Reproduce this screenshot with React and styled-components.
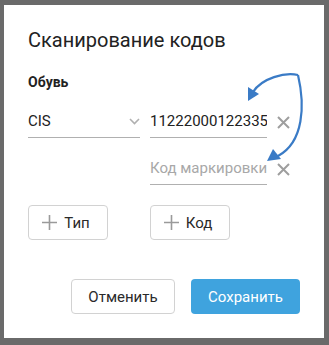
import React from "react";
import styled, { createGlobalStyle } from "styled-components";

const GlobalStyle = createGlobalStyle`
  html, body {
    margin: 0;
    padding: 0;
    background: #6a6a6a;
    font-family: Roboto, "Noto Sans", Arial, sans-serif;
  }
`;

const Backdrop = styled.div`
  width: 329px;
  height: 345px;
  padding: 5px 0 0 4px;
  box-sizing: border-box;
`;

const Modal = styled.div`
  position: relative;
  width: 320px;
  height: 333px;
  box-sizing: border-box;
  padding: 23px 24px 24px 24px;
  background: #ffffff;
  display: flex;
  flex-direction: column;
`;

const Title = styled.h2`
  margin: 0;
  font-size: 20px;
  line-height: 24px;
  font-weight: 400;
  color: #222222;
`;

const SectionLabel = styled.div`
  margin-top: 22px;
  font-size: 14px;
  line-height: 16px;
  font-weight: 700;
  color: #222222;
`;

const Row = styled.div`
  display: flex;
  align-items: flex-end;
  margin-top: ${(p) => p.$top}px;
`;

const Field = styled.div`
  width: ${(p) => p.$width}px;
  margin-right: ${(p) => p.$gap || 0}px;
  box-sizing: border-box;
  display: flex;
  align-items: center;
  justify-content: space-between;
  padding-bottom: 7px;
  border-bottom: 1px solid #b0b0b0;
  font-size: 15px;
  line-height: 18px;
  color: ${(p) => (p.$placeholder ? "#a8a8a8" : "#222222")};
  white-space: nowrap;
  overflow: hidden;
`;

const Spacer = styled.div`
  width: ${(p) => p.$width}px;
  margin-right: ${(p) => p.$gap || 0}px;
`;

const ClearButton = styled.button`
  margin: 0 0 ${(p) => p.$bottom}px 9px;
  padding: 0;
  border: none;
  background: none;
  width: 14px;
  height: 14px;
  display: flex;
  align-items: center;
  justify-content: center;
  cursor: pointer;
`;

const AddRow = styled.div`
  display: flex;
  gap: 42px;
  margin-top: 20px;
`;

const OutlineButton = styled.button`
  width: ${(p) => p.$width}px;
  height: 35px;
  box-sizing: border-box;
  border: 1px solid #d2d2d2;
  border-radius: 4px;
  background: #ffffff;
  display: flex;
  align-items: center;
  justify-content: center;
  gap: 7px;
  font-family: inherit;
  font-size: 15px;
  color: #2a2a2a;
  padding: 0 ${(p) => p.$pad || 0}px 0 0;
  cursor: pointer;
`;

const Footer = styled.div`
  margin-top: auto;
  display: flex;
  justify-content: flex-end;
  gap: 16px;
`;

const PrimaryButton = styled.button`
  width: 109px;
  height: 35px;
  border: none;
  border-radius: 4px;
  background: #3fa3de;
  color: #ffffff;
  font-family: inherit;
  font-size: 15px;
  cursor: pointer;
`;

const Arrows = styled.svg`
  position: absolute;
  left: 0;
  top: 0;
  pointer-events: none;
`;

const CrossIcon = () => (
  <svg width="13" height="13" viewBox="0 0 13 13">
    <path d="M1 1L12 12M12 1L1 12" stroke="#9e9e9e" strokeWidth="2" />
  </svg>
);

const PlusIcon = () => (
  <svg width="15" height="15" viewBox="0 0 15 15">
    <path d="M7.5 0V15M0 7.5H15" stroke="#9a9a9a" strokeWidth="1.6" />
  </svg>
);

const Chevron = () => (
  <svg width="11" height="7" viewBox="0 0 11 7">
    <path d="M1 1L5.5 5.5L10 1" stroke="#b0b0b0" strokeWidth="1.6" fill="none" />
  </svg>
);

export default function App() {
  return (
    <>
      <GlobalStyle />
      <Backdrop>
        <Modal>
          <Title>Сканирование кодов</Title>
          <SectionLabel>Обувь</SectionLabel>
          <Row $top={22}>
            <Field $width={112} $gap={10}>
              <span>CIS</span>
              <Chevron />
            </Field>
            <Field $width={117}>11222000122335</Field>
            <ClearButton $bottom={9}>
              <CrossIcon />
            </ClearButton>
          </Row>
          <Row $top={21}>
            <Spacer $width={112} $gap={10} />
            <Field $width={117} $placeholder>
              Код маркировки
            </Field>
            <ClearButton $bottom={9}>
              <CrossIcon />
            </ClearButton>
          </Row>
          <AddRow>
            <OutlineButton $width={80} $pad={4}>
              <PlusIcon />
              Тип
            </OutlineButton>
            <OutlineButton $width={80} $pad={4}>
              <PlusIcon />
              Код
            </OutlineButton>
          </AddRow>
          <Footer>
            <OutlineButton $width={104}>Отменить</OutlineButton>
            <PrimaryButton>Сохранить</PrimaryButton>
          </Footer>
          <Arrows width="320" height="333" viewBox="4 5 320 333">
            <path
              d="M298 75 C285 72 262 78 253 92"
              stroke="#3a7bc6"
              strokeWidth="2.2"
              fill="none"
            />
            <path d="M248 101 L248 87 L259 94 Z" fill="#3a7bc6" />
            <path
              d="M298 75 C305 105 304 142 278 156"
              stroke="#3a7bc6"
              strokeWidth="2.2"
              fill="none"
            />
            <path d="M267 161 L273 149 L281 159 Z" fill="#3a7bc6" />
          </Arrows>
        </Modal>
      </Backdrop>
    </>
  );
}
